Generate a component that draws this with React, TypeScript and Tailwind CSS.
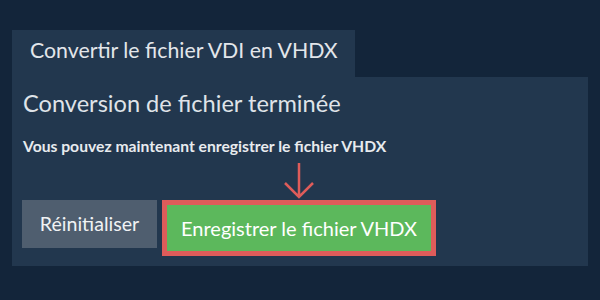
export default function App() {
  return (
    <div className="w-[600px] h-[300px] bg-[#13253a] pt-[30px] px-[12px] font-['Lato','Liberation_Sans',sans-serif]">
      {/* Tab */}
      <div className="w-[343px] h-[47px] bg-[#22374e] pl-[18px] pt-[6px] text-[21.3px] leading-[28px] text-[#e3e6ea]">
        Convertir le fichier VDI en VHDX
      </div>

      {/* Panel */}
      <div className="w-[576px] h-[189px] bg-[#22374e] pl-[11px] pt-[10px]">
        <h2 className="text-[23.6px] leading-[32px] text-[#dfe3e8]">Conversion de fichier terminée</h2>
        <p className="mt-[17px] text-[15.7px] leading-[20px] font-bold text-[#e8ebee]">
          Vous pouvez maintenant enregistrer le fichier VHDX
        </p>

        <div className="flex items-start gap-[5px] mt-[7px] -ml-[1px]">
          <div className="flex flex-col">
            <div className="h-[37px]" />
            <button className="w-[135px] h-[48px] bg-[#4f5e6f] text-[19.6px] text-[#f0f2f4]">
              Réinitialiser
            </button>
          </div>
          <div className="flex flex-col items-center">
            <svg width="32" height="37" viewBox="0 0 32 37">
              <path d="M16 0 V34 M2 20 L16 34 L30 20" fill="none" stroke="#de5c5a" strokeWidth="2.5" />
            </svg>
            <div className="border-[5px] border-[#de5c5a]">
              <button className="w-[264px] h-[46px] bg-[#5cb85c] text-[20px] text-white">
                Enregistrer le fichier VHDX
              </button>
            </div>
          </div>
        </div>
      </div>
    </div>
  )
}
